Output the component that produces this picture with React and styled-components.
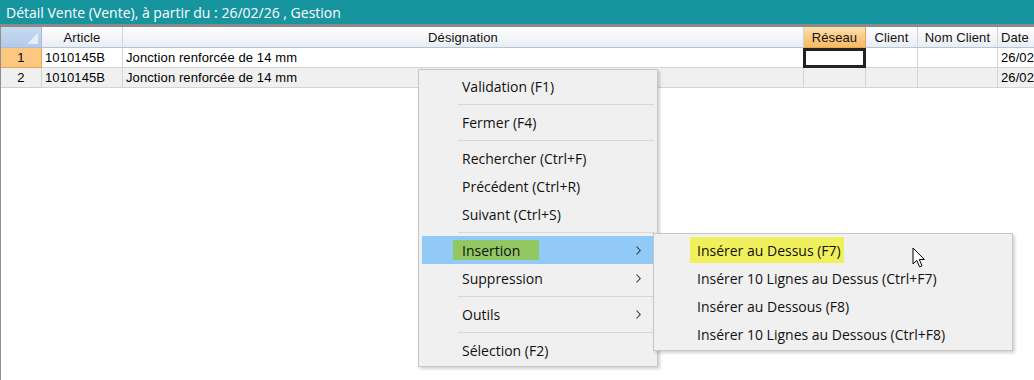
import React from "react";
import styled, { createGlobalStyle } from "styled-components";

const GlobalStyle = createGlobalStyle`
  html, body { margin: 0; padding: 0; background: #ffffff; }
  body { width: 1034px; height: 380px; overflow: hidden; }
  #root { width: 1034px; height: 380px; }
`;

const Window = styled.div`
  position: relative;
  width: 1034px;
  height: 380px;
  display: flex;
  flex-direction: column;
  background: #ffffff;
  overflow: hidden;
`;

const TitleBar = styled.div`
  height: 24px;
  flex: none;
  display: flex;
  align-items: center;
  padding-left: 6px;
  background: #17959f;
  color: #ffffff;
  font-family: "Open Sans", "Noto Sans", sans-serif;
  font-size: 14px;
  border-bottom: 3px solid #8a8a8a;
  white-space: nowrap;
`;

const Body = styled.div`
  flex: 1;
  border-left: 1px solid #8f8f8f;
  background: #ffffff;
`;

const Grid = styled.div`
  display: grid;
  grid-template-columns: 41px 81px 681px 62px 52px 80px 120px;
  grid-template-rows: 21px 20px 20px;
  font-family: "Liberation Sans", Arial, sans-serif;
  font-size: 13px;
  letter-spacing: 0.1px;
  color: #000;
`;

const HeaderCell = styled.div`
  display: flex;
  align-items: center;
  justify-content: center;
  white-space: nowrap;
  overflow: hidden;
  color: #111;
  background: ${(p) =>
    p.$active
      ? "linear-gradient(to bottom, #fde0b0 0%, #f9c77f 60%, #f6bb63 100%)"
      : "linear-gradient(to bottom, #fdfdfe 0%, #f3f5f8 55%, #e9edf3 100%)"};
  border-right: 1px solid ${(p) => (p.$active ? "#e6a855" : "#c9d6e4")};
  border-bottom: 1px solid ${(p) => (p.$active ? "#e6a855" : "#b4c5d8")};
  ${(p) => (p.$left ? "justify-content: flex-start; padding-left: 3px;" : "")}
`;

const Corner = styled.div`
  background: linear-gradient(to bottom, #c7daf1, #b3cbe9);
  border-right: 1px solid #a7bfdc;
  border-bottom: 1px solid #a7bfdc;
  display: flex;
  align-items: flex-end;
  justify-content: flex-end;
  padding: 0 3px 3px 0;
  box-sizing: border-box;
`;

const RowHeader = styled.div`
  display: flex;
  align-items: center;
  justify-content: center;
  background: ${(p) => (p.$current ? "#fbc882" : "#f0f0f0")};
  border-right: 1px solid ${(p) => (p.$current ? "#e8a650" : "#cfcfcf")};
  border-bottom: 1px solid ${(p) => (p.$current ? "#e8a650" : "#cfcfcf")};
`;

const Cell = styled.div`
  display: flex;
  align-items: center;
  padding-left: 3px;
  white-space: nowrap;
  overflow: hidden;
  box-sizing: border-box;
  background: ${(p) => (p.$alt ? "#f0f0f0" : "#ffffff")};
  border-right: 1px solid #d4d4d4;
  border-bottom: 1px solid #d4d4d4;
  ${(p) =>
    p.$focus
      ? "box-shadow: inset 0 0 0 3px #222222; margin: 0 -1px -1px -1px;"
      : ""}
`;

const Menu = styled.div`
  position: absolute;
  left: ${(p) => p.$x}px;
  top: ${(p) => p.$y}px;
  width: ${(p) => p.$w}px;
  box-sizing: border-box;
  padding: 2px 2px 2px 3px;
  background: #f0f0f0;
  border: 1px solid #c6c6c6;
  box-shadow: 2px 2px 3px rgba(0, 0, 0, 0.18);
  font-family: "Open Sans", "Noto Sans", sans-serif;
  font-size: 14px;
  color: #111;
`;

const Item = styled.div`
  height: 28px;
  display: flex;
  align-items: center;
  padding-left: ${(p) => p.$indent}px;
  padding-right: 14px;
  white-space: nowrap;
  background: ${(p) => (p.$hover ? "#91c9f7" : "transparent")};
`;

const Separator = styled.div`
  height: 8px;
  margin-left: 36px;
  margin-right: 1px;
  display: flex;
  align-items: center;
  &::after {
    content: "";
    flex: 1;
    height: 1px;
    background: #d7d7d7;
  }
`;

const Mark = styled.span`
  display: flex;
  align-items: center;
  box-sizing: border-box;
  width: ${(p) => p.$w}px;
  height: ${(p) => p.$h}px;
  margin-left: ${(p) => -p.$pad}px;
  padding-left: ${(p) => p.$pad}px;
  background: ${(p) => p.$color};
`;

const Chevron = styled.svg`
  margin-left: auto;
  flex: none;
`;

const Cursor = styled.svg`
  position: absolute;
  left: 912px;
  top: 247px;
`;

const Arrow = () => (
  <Chevron width="5" height="9" viewBox="0 0 5 9">
    <path d="M0.5 0.5 L4.2 4.5 L0.5 8.5" fill="none" stroke="#333" strokeWidth="1.1" />
  </Chevron>
);

const rows = [
  { n: 1, article: "1010145B", designation: "Jonction renforcée de 14 mm", date: "26/02/26" },
  { n: 2, article: "1010145B", designation: "Jonction renforcée de 14 mm", date: "26/02/26" },
];

export default function App() {
  return (
    <>
      <GlobalStyle />
      <Window>
        <TitleBar>Détail Vente (Vente), à partir du : 26/02/26 , Gestion</TitleBar>
        <Body>
          <Grid>
            <Corner>
              <svg width="11" height="11" viewBox="0 0 11 11">
                <path d="M11 0 L11 11 L0 11 Z" fill="#e4edf8" />
              </svg>
            </Corner>
            <HeaderCell>Article</HeaderCell>
            <HeaderCell>Désignation</HeaderCell>
            <HeaderCell $active>Réseau</HeaderCell>
            <HeaderCell>Client</HeaderCell>
            <HeaderCell>Nom Client</HeaderCell>
            <HeaderCell $left>Date</HeaderCell>
            {rows.map((r) => {
              const alt = r.n % 2 === 0;
              return (
                <React.Fragment key={r.n}>
                  <RowHeader $current={r.n === 1}>{r.n}</RowHeader>
                  <Cell $alt={alt}>{r.article}</Cell>
                  <Cell $alt={alt}>{r.designation}</Cell>
                  <Cell $alt={alt} $focus={r.n === 1} />
                  <Cell $alt={alt} />
                  <Cell $alt={alt} />
                  <Cell $alt={alt}>{r.date}</Cell>
                </React.Fragment>
              );
            })}
          </Grid>
        </Body>

        <Menu $x={418} $y={69} $w={240}>
          <Item $indent={40}>Validation (F1)</Item>
          <Separator />
          <Item $indent={40}>Fermer (F4)</Item>
          <Separator />
          <Item $indent={40}>Rechercher (Ctrl+F)</Item>
          <Item $indent={40}>Précédent (Ctrl+R)</Item>
          <Item $indent={40}>Suivant (Ctrl+S)</Item>
          <Separator />
          <Item $indent={40} $hover>
            <Mark $w={86} $h={20} $pad={9} $color="#93c761">Insertion</Mark>
            <Arrow />
          </Item>
          <Item $indent={40}>
            Suppression
            <Arrow />
          </Item>
          <Separator />
          <Item $indent={40}>
            Outils
            <Arrow />
          </Item>
          <Separator />
          <Item $indent={40}>Sélection (F2)</Item>
        </Menu>

        <Menu $x={653} $y={233} $w={360}>
          <Item $indent={40}>
            <Mark $w={154} $h={26} $pad={7} $color="#f0f05c">Insérer au Dessus (F7)</Mark>
          </Item>
          <Item $indent={40}>Insérer 10 Lignes au Dessus (Ctrl+F7)</Item>
          <Item $indent={40}>Insérer au Dessous (F8)</Item>
          <Item $indent={40}>Insérer 10 Lignes au Dessous (Ctrl+F8)</Item>
        </Menu>

        <Cursor width="14" height="22" viewBox="0 0 14 22">
          <path
            d="M1 1 L1 17 L4.8 13.4 L7.6 19.8 L10 18.8 L7.3 12.5 L12.4 12.5 Z"
            fill="#ffffff"
            stroke="#000000"
            strokeWidth="1"
            strokeLinejoin="miter"
          />
        </Cursor>
      </Window>
    </>
  );
}
